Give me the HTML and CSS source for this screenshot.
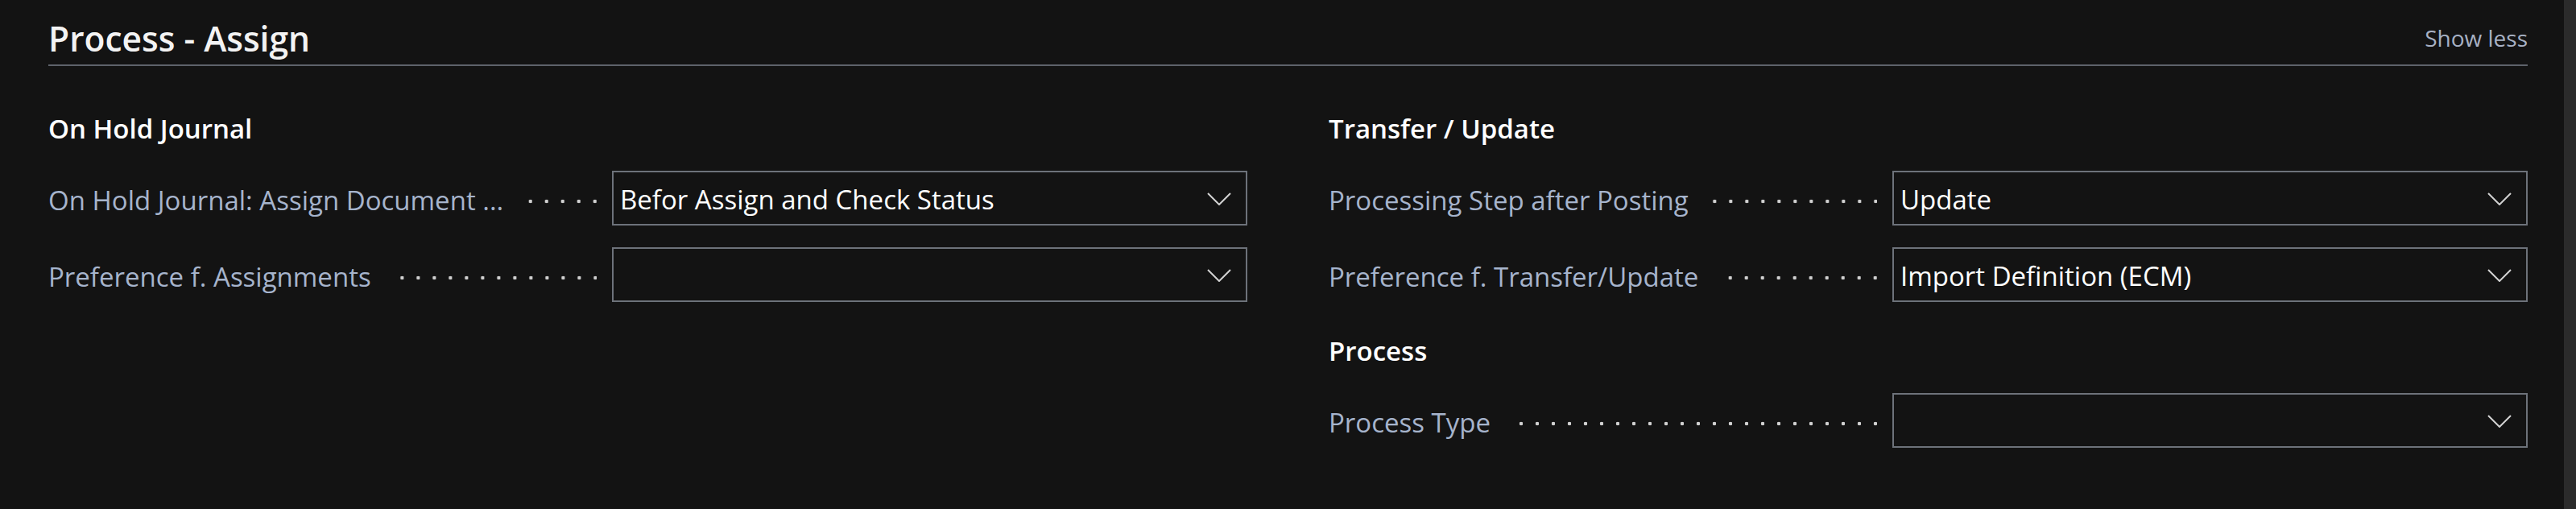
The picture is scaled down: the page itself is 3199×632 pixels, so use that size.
FILE: index.html
```html
<!DOCTYPE html>
<html lang="en">
<head>
<meta charset="utf-8">
<title>Process - Assign</title>
<link rel="stylesheet" href="styles.css">
</head>
<body>
<div class="page">
  <main class="content">
    <header class="tab-header">
      <h1 class="tab-title">Process - Assign</h1>
      <span class="show-less">Show less</span>
    </header>
    <div class="columns">
      <section class="column">
        <div class="group">
          <h2 class="group-title">On Hold Journal</h2>
          <div class="field">
            <div class="field-label"><span class="label-text">On Hold Journal: Assign Document ...</span><span class="leader"></span></div>
            <div class="select"><span class="select-value">Befor Assign and Check Status</span><svg class="chevron" viewBox="0 0 30 16" width="30" height="16"><polyline points="1,1 15,15 29,1" /></svg></div>
          </div>
          <div class="field">
            <div class="field-label"><span class="label-text">Preference f. Assignments</span><span class="leader"></span></div>
            <div class="select"><span class="select-value"></span><svg class="chevron" viewBox="0 0 30 16" width="30" height="16"><polyline points="1,1 15,15 29,1" /></svg></div>
          </div>
        </div>
      </section>
      <section class="column">
        <div class="group">
          <h2 class="group-title">Transfer / Update</h2>
          <div class="field">
            <div class="field-label"><span class="label-text">Processing Step after Posting</span><span class="leader"></span></div>
            <div class="select"><span class="select-value">Update</span><svg class="chevron" viewBox="0 0 30 16" width="30" height="16"><polyline points="1,1 15,15 29,1" /></svg></div>
          </div>
          <div class="field">
            <div class="field-label"><span class="label-text">Preference f. Transfer/Update</span><span class="leader"></span></div>
            <div class="select"><span class="select-value">Import Definition (ECM)</span><svg class="chevron" viewBox="0 0 30 16" width="30" height="16"><polyline points="1,1 15,15 29,1" /></svg></div>
          </div>
        </div>
        <div class="group">
          <h2 class="group-title">Process</h2>
          <div class="field">
            <div class="field-label"><span class="label-text">Process Type</span><span class="leader"></span></div>
            <div class="select"><span class="select-value"></span><svg class="chevron" viewBox="0 0 30 16" width="30" height="16"><polyline points="1,1 15,15 29,1" /></svg></div>
          </div>
        </div>
      </section>
    </div>
  </main>
  <div class="scrollbar"></div>
</div>
</body>
</html>
```

FILE: styles.css
```css
html, body {
  margin: 0;
  padding: 0;
  background: #131313;
}

body {
  font-family: "Open Sans", "Noto Sans", sans-serif;
  color: #ffffff;
}

.page {
  display: flex;
  height: 632px;
  overflow: hidden;
}

.content {
  flex: 1;
  min-width: 0;
  padding: 18px 45px 0 60px;
}

.scrollbar {
  width: 15px;
  background: #2b2b2b;
}

.tab-header {
  display: flex;
  justify-content: space-between;
  align-items: flex-start;
  border-bottom: 2px solid #5e626b;
}

.tab-title {
  margin: 0;
  padding-bottom: 2px;
  font-size: 42.5px;
  line-height: 60px;
  font-weight: 600;
  color: #f3f3f3;
}

.show-less {
  margin-top: 9px;
  font-size: 28px;
  line-height: 40px;
  color: #a7b1c4;
}

.columns {
  display: grid;
  grid-template-columns: 1fr 1fr;
  column-gap: 101px;
  padding-top: 56px;
}

.column {
  display: flex;
  flex-direction: column;
  gap: 39px;
}

.group {
  display: flex;
  flex-direction: column;
  gap: 27px;
}

.group-title {
  margin: 0 0 3px;
  font-size: 33px;
  line-height: 44px;
  font-weight: 600;
  color: #ffffff;
}

.field {
  display: grid;
  grid-template-columns: 700px 1fr;
  height: 68px;
}

.field-label {
  display: flex;
  align-items: center;
  min-width: 0;
  padding-top: 4px;
  box-sizing: border-box;
}

.label-text {
  font-size: 33px;
  color: #a6b4cc;
  white-space: nowrap;
}

.leader {
  flex: 1;
  height: 6px;
  margin: 4px 19px 0 26px;
  background: radial-gradient(circle at 18px 3px, #d0d0d0 2px, rgba(208, 208, 208, 0) 2.6px) right center / 20px 6px repeat-x;
}

.select {
  display: flex;
  align-items: center;
  box-sizing: border-box;
  height: 68px;
  border: 2px solid #6d727a;
  padding: 2px 18px 0 8px;
}

.select-value {
  flex: 1;
  font-size: 33px;
  color: #ffffff;
  white-space: nowrap;
}

.chevron {
  flex: none;
  fill: none;
  stroke: #d2d2d2;
  stroke-width: 2;
}
```
